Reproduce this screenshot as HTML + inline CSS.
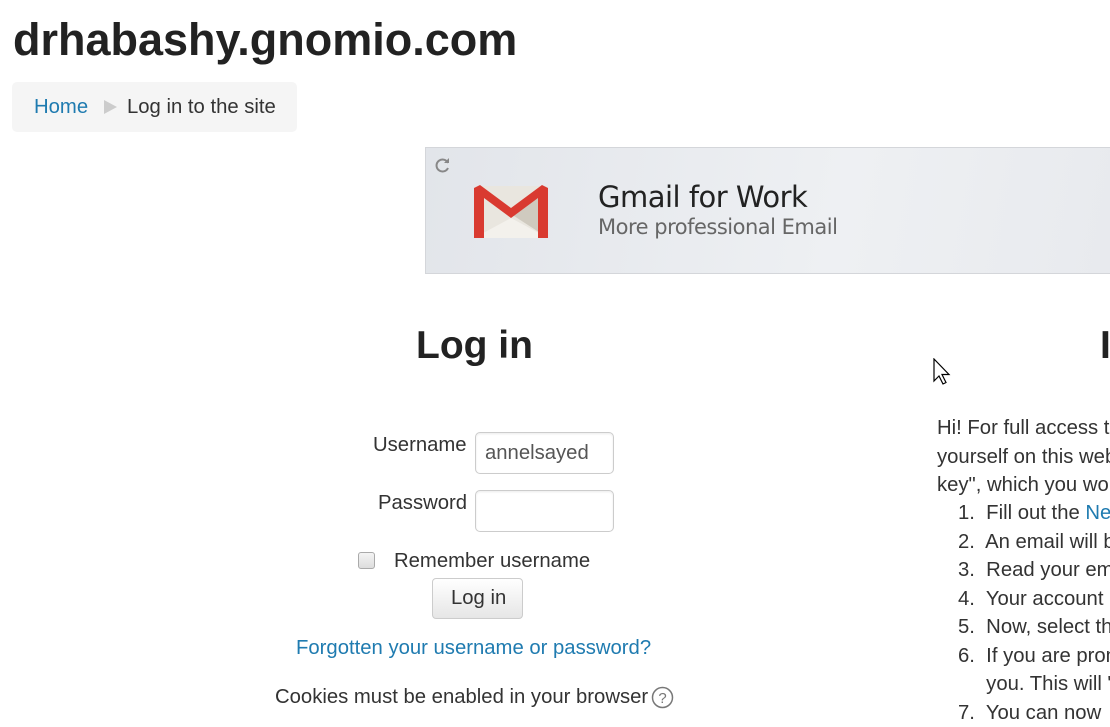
<!DOCTYPE html>
<html><head><meta charset="utf-8"><style>
html,body{margin:0;padding:0;width:1110px;height:718px;overflow:hidden;background:#fff;font-family:"Liberation Sans",Arial,sans-serif;color:#333}
.a{position:absolute;white-space:nowrap}
.t{font-size:20.3px;color:#333}
.lnk{color:#1f7bb0}
.inp{position:absolute;border:1px solid #ccc;border-radius:5px;background:#fff;box-shadow:inset 0 1px 2px rgba(0,0,0,.08)}
</style></head><body>
<div class="a" style="left:13px;top:14px;font-size:45px;font-weight:bold;color:#222">drhabashy.gnomio.com</div>
<div class="a" style="left:12px;top:82px;width:285px;height:50px;background:#f5f5f5;border-radius:5px"></div>
<div class="a t" style="left:34px;top:96px"><span class="lnk">Home</span></div>
<div class="a" style="left:104px;top:100px;width:0;height:0;border-left:13px solid #ccc;border-top:7px solid transparent;border-bottom:7px solid transparent"></div>
<div class="a t" style="left:127px;top:96px">Log in to the site</div>

<div class="a" style="left:425px;top:147px;width:690px;height:127px;background:linear-gradient(100deg,#e2e5ea,#eef0f3 60%,#e8eaee);border:1px solid #d4d6da;box-sizing:border-box"></div>
<svg class="a" style="left:433px;top:155px" width="20" height="20" viewBox="0 0 20 20"><path d="M15 8A6 6 0 1 0 15 13" fill="none" stroke="#888" stroke-width="2"/><path d="M11 8h5V3z" fill="#888"/></svg>
<svg class="a" style="left:474px;top:184px" width="74" height="54" viewBox="0 0 74 54">
<rect x="0" y="2" width="74" height="52" rx="3" fill="#e9e6df"/>
<path d="M37 34L0 54h74z" fill="#f3f1ec"/>
<path d="M37 30L74 54V8z" fill="#cfcabf"/>
<path d="M0 4v50h10V14l27 20 27-20v40h10V4l-6-3-31 23L6 1z" fill="#d93a30"/>
</svg>
<div class="a" style="left:598px;top:180px;font-size:29px;color:#222;font-family:'DejaVu Sans','Liberation Sans',sans-serif;letter-spacing:-0.5px">Gmail for Work</div>
<div class="a" style="left:598px;top:215px;font-size:21px;color:#666;font-family:'DejaVu Sans','Liberation Sans',sans-serif;letter-spacing:-0.5px">More professional Email</div>

<div class="a" style="left:416px;top:324px;font-size:39px;font-weight:bold;color:#222">Log in</div>
<div class="a" style="left:1100px;top:324px;font-size:39px;font-weight:bold;color:#222">I</div>
<svg class="a" style="left:933px;top:358px" width="20" height="28" viewBox="0 0 20 28"><path d="M1 1v22l5-5 4 8 3-1.5-4-8h7z" fill="#fff" stroke="#000" stroke-width="1.2"/></svg>

<div class="a t" style="left:373px;top:434px">Username</div>
<div class="inp" style="left:475px;top:432px;width:137px;height:40px"></div>
<div class="a t" style="left:485px;top:442px;color:#555">annelsayed</div>
<div class="a t" style="left:378px;top:492px">Password</div>
<div class="inp" style="left:475px;top:490px;width:137px;height:40px"></div>
<div class="a" style="left:358px;top:552px;width:15px;height:15px;border:1px solid #aaa;border-radius:3px;background:linear-gradient(#f4f4f4,#ddd)"></div>
<div class="a t" style="left:394px;top:550px">Remember username</div>
<div class="a" style="left:432px;top:578px;width:91px;height:41px;border:1px solid #ccc;border-radius:4px;background:linear-gradient(#fff,#e6e6e6);box-sizing:border-box"></div>
<div class="a t" style="left:451px;top:587px">Log in</div>
<div class="a t lnk" style="left:296px;top:637px">Forgotten your username or password?</div>
<div class="a t" style="left:275px;top:686px">Cookies must be enabled in your browser</div>
<svg class="a" style="left:651px;top:686px" width="23" height="23" viewBox="0 0 23 23"><circle cx="11.5" cy="11.5" r="10" fill="none" stroke="#777" stroke-width="1.5"/><text x="11.5" y="17" font-size="15" text-anchor="middle" fill="#777" font-family="Liberation Sans">?</text></svg>

<div class="a t" style="left:937px;top:414px;line-height:28.5px">Hi! For full access to<br>yourself on this website<br>key", which you would</div>
<div class="a t" style="left:958px;top:499px;line-height:28.5px">1.&nbsp; Fill out the <span class="lnk">New</span><br>2.&nbsp; An email will be<br>3.&nbsp; Read your email<br>4.&nbsp; Your account<br>5.&nbsp; Now, select the<br>6.&nbsp; If you are prom<br>&nbsp;&nbsp;&nbsp;&nbsp; you. This will "<br>7.&nbsp; You can now</div>
</body></html>
